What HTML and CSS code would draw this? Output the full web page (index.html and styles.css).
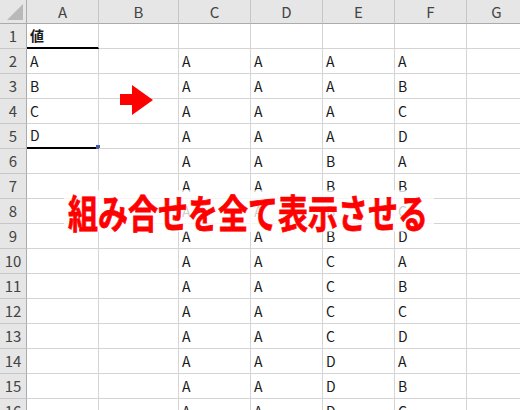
FILE: index.html
```html
<!DOCTYPE html>
<html lang="ja">
<head>
<meta charset="utf-8">
<link rel="stylesheet" href="styles.css">
</head>
<body>
<div class="sheet">
  <div class="grid">
    <div class="corner"><span class="tri"></span></div>
    <div class="h">A</div><div class="h">B</div><div class="h">C</div><div class="h">D</div><div class="h">E</div><div class="h">F</div><div class="h">G</div>

    <div class="r">1</div><div class="c bold under">値</div><div class="c"></div><div class="c"></div><div class="c"></div><div class="c"></div><div class="c"></div><div class="c"></div>
    <div class="r">2</div><div class="c">A</div><div class="c"></div><div class="c">A</div><div class="c">A</div><div class="c">A</div><div class="c">A</div><div class="c"></div>
    <div class="r">3</div><div class="c">B</div><div class="c"></div><div class="c">A</div><div class="c">A</div><div class="c">A</div><div class="c">B</div><div class="c"></div>
    <div class="r">4</div><div class="c">C</div><div class="c"></div><div class="c">A</div><div class="c">A</div><div class="c">A</div><div class="c">C</div><div class="c"></div>
    <div class="r">5</div><div class="c under">D<span class="handle"></span></div><div class="c"></div><div class="c">A</div><div class="c">A</div><div class="c">A</div><div class="c">D</div><div class="c"></div>
    <div class="r">6</div><div class="c"></div><div class="c"></div><div class="c">A</div><div class="c">A</div><div class="c">B</div><div class="c">A</div><div class="c"></div>
    <div class="r">7</div><div class="c"></div><div class="c"></div><div class="c">A</div><div class="c">A</div><div class="c">B</div><div class="c">B</div><div class="c"></div>
    <div class="r">8</div><div class="c"></div><div class="c"></div><div class="c">A</div><div class="c">A</div><div class="c">B</div><div class="c">C</div><div class="c"></div>
    <div class="r">9</div><div class="c"></div><div class="c"></div><div class="c">A</div><div class="c">A</div><div class="c">B</div><div class="c">D</div><div class="c"></div>
    <div class="r">10</div><div class="c"></div><div class="c"></div><div class="c">A</div><div class="c">A</div><div class="c">C</div><div class="c">A</div><div class="c"></div>
    <div class="r">11</div><div class="c"></div><div class="c"></div><div class="c">A</div><div class="c">A</div><div class="c">C</div><div class="c">B</div><div class="c"></div>
    <div class="r">12</div><div class="c"></div><div class="c"></div><div class="c">A</div><div class="c">A</div><div class="c">C</div><div class="c">C</div><div class="c"></div>
    <div class="r">13</div><div class="c"></div><div class="c"></div><div class="c">A</div><div class="c">A</div><div class="c">C</div><div class="c">D</div><div class="c"></div>
    <div class="r">14</div><div class="c"></div><div class="c"></div><div class="c">A</div><div class="c">A</div><div class="c">D</div><div class="c">A</div><div class="c"></div>
    <div class="r">15</div><div class="c"></div><div class="c"></div><div class="c">A</div><div class="c">A</div><div class="c">D</div><div class="c">B</div><div class="c"></div>
    <div class="r">16</div><div class="c"></div><div class="c"></div><div class="c">A</div><div class="c">A</div><div class="c">D</div><div class="c">C</div><div class="c"></div>
  </div>

  <svg class="arrow" width="34" height="32" viewBox="0 0 34 32">
    <polygon points="0,9 12,9 12,0 33,15 12,30 12,20 0,20" fill="#ff0000"/>
  </svg>

  <div class="caption">組み合せを全て表示させる</div>
</div>
</body>
</html>
```

FILE: styles.css
```css
html, body {
  margin: 0;
  padding: 0;
  background: #ffffff;
  overflow: hidden;
}

.sheet {
  position: relative;
  width: 520px;
  height: 410px;
  overflow: hidden;
  font-family: "Noto Sans CJK JP", "Noto Sans", sans-serif;
  font-size: 14px;
  color: #1a1a1a;
}

.grid {
  display: grid;
  grid-template-columns: 27px 72px 80px 72px 72px 72px 72px 60px;
  grid-template-rows: 24px;
  grid-auto-rows: 25px;
}

.corner {
  position: relative;
  background: #e6e6e6;
  border-right: 1px solid #ababab;
  border-bottom: 1px solid #ababab;
  box-sizing: border-box;
}

.tri {
  position: absolute;
  right: 3px;
  bottom: 3px;
  width: 0;
  height: 0;
  border-left: 16px solid transparent;
  border-bottom: 16px solid #b9b9b9;
}

.h {
  background: #e6e6e6;
  border-right: 1px solid #c6c6c6;
  border-bottom: 1px solid #ababab;
  box-sizing: border-box;
  text-align: center;
  line-height: 23px;
  color: #444444;
  font-size: 15px;
}

.r {
  background: #e6e6e6;
  border-right: 1px solid #ababab;
  border-bottom: 1px solid #c6c6c6;
  box-sizing: border-box;
  text-align: center;
  line-height: 24px;
  color: #444444;
  font-size: 15px;
}

.c {
  position: relative;
  border-right: 1px solid #d4d4d4;
  border-bottom: 1px solid #d4d4d4;
  box-sizing: border-box;
  padding-left: 3px;
  line-height: 24px;
  white-space: nowrap;
}

.bold {
  font-weight: bold;
}

.under {
  border-bottom: 2px solid #000000;
  line-height: 23px;
}

.handle {
  position: absolute;
  right: -2px;
  bottom: -2px;
  width: 4px;
  height: 4px;
  background: #4a5aa6;
}

.arrow {
  position: absolute;
  left: 120px;
  top: 85px;
}

.caption {
  position: absolute;
  left: 64px;
  top: 195px;
  padding: 0 6px 0 4px;
  background: rgba(255, 255, 255, 0.78);
  color: #ff0000;
  font-weight: bold;
  font-size: 30px;
  line-height: 32px;
  -webkit-text-stroke: 0.6px #ff0000;
  white-space: nowrap;
  transform: scaleY(1.3);
  transform-origin: 50% 50%;
}
```
